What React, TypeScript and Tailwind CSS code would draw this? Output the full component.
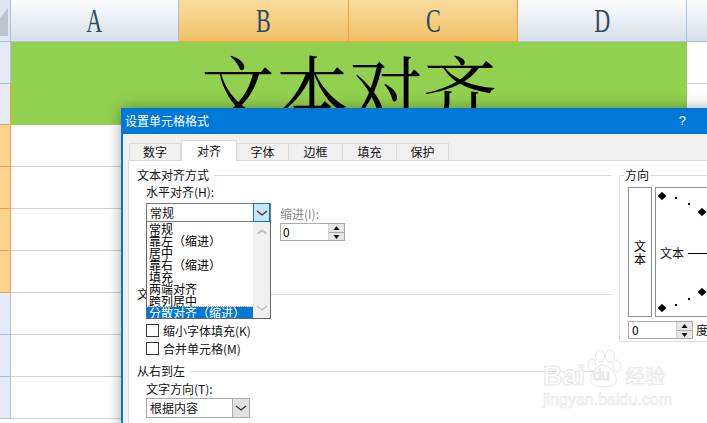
const font = { fontFamily: '"Noto Sans CJK SC", "Liberation Sans", sans-serif' }

const rows = [0, 1, 2, 3, 4, 5, 6]
const columns = [
  { name: 'A', width: 'w-[168px]', active: false },
  { name: 'B', width: 'w-[170px]', active: true },
  { name: 'C', width: 'w-[169px]', active: true },
  { name: 'D', width: 'w-[169px]', active: false },
]
const tabs = [
  { name: '数字', width: 'w-[52px]' },
  { name: '对齐', width: 'w-[56px]' },
  { name: '字体', width: 'w-[52px]' },
  { name: '边框', width: 'w-[54px]' },
  { name: '填充', width: 'w-[54px]' },
  { name: '保护', width: 'w-[52px]' },
]

function Spinner({ className }: { className: string }) {
  return (
    <div className={`flex flex-col justify-center gap-[1px] border-l border-[#d0d0d0] bg-[#e6e6e6] ${className}`}>
      <svg viewBox="0 0 14 6" className="h-[6px] w-full"><path d="M7 1 L10 5 L4 5 Z" fill="#111" /></svg>
      <div className="h-[1px] bg-[#aaa]" />
      <svg viewBox="0 0 14 6" className="h-[6px] w-full"><path d="M4 1 L10 1 L7 5 Z" fill="#111" /></svg>
    </div>
  )
}

function Chevron({ stroke = '#333' }: { stroke?: string }) {
  return (
    <svg viewBox="0 0 14 8" className="h-[8px] w-[14px]">
      <path d="M2 2 L7 6 L12 2" fill="none" stroke={stroke} strokeWidth="1.3" />
    </svg>
  )
}

function Diamond() {
  return <div className="h-[6px] w-[6px] rotate-45 bg-black" />
}

function Dot() {
  return <div className="h-[2px] w-[2px] bg-black" />
}

function Group({ title, className, children }: { title: string; className: string; children?: React.ReactNode }) {
  return (
    <div className={className}>
      <div className="flex items-center gap-[5px] text-[12px] leading-[16px] text-[#111]">
        <span>{title}</span>
        <div className="h-[1px] flex-1 bg-[#dcdcdc]" />
      </div>
      {children}
    </div>
  )
}

const listItems = ['常规', '靠左（缩进）', '居中', '靠右（缩进）', '填充', '两端对齐', '跨列居中']

export default function App() {
  return (
    <div className="relative h-[423px] w-[707px] overflow-hidden bg-white" style={font}>
      {/* sheet header */}
      <div className="flex h-[42px]">
        <div className="flex w-[11px] items-center justify-end border-r border-b border-[#a9c0df] bg-[#dfe6f2]">
          <svg viewBox="0 0 10 41" className="h-[41px] w-[10px]"><path d="M8 8 V36 H0 V18 Z" fill="#bcc4cc" /></svg>
        </div>
        {columns.map(c => (
          <div
            key={c.name}
            className={`flex items-center justify-center border-r border-b text-[#2f4a5e] ${c.width} ${
              c.active
                ? 'border-[#f0a040] bg-gradient-to-b from-[#f9dc9f] to-[#f2c164]'
                : 'border-[#a9c0df] bg-gradient-to-b from-[#fbfcfe] to-[#d8dfea]'
            }`}
            style={{ fontFamily: '"Liberation Serif", serif' }}
          >
            <span className="scale-x-[0.65] text-[34px] leading-none">{c.name}</span>
          </div>
        ))}
        <div className="flex-1 border-b border-[#a9c0df] bg-gradient-to-b from-[#fbfcfe] to-[#d8dfea]" />
      </div>

      {/* sheet body */}
      <div className="flex">
        <div className="flex w-[11px] flex-col">
          <div className="h-[42px] border-r border-b border-[#a9c0df] bg-[#e4ebf7]" />
          <div className="h-[41px] border-r border-b border-[#f0a040] bg-[#e4ebf7]" />
          {rows.map(r => (
            <div
              key={r}
              className={`h-[42px] border-r border-b ${
                r < 4 ? 'border-[#f0a040] bg-[#fad48c]' : 'border-[#a9c0df] bg-[#e4ebf7]'
              }`}
            />
          ))}
        </div>
        <div className="flex-1">
          <div className="flex h-[83px]">
            <div className="flex w-[676px] items-start justify-center bg-[#92d14f] pt-[1px] text-[74px] leading-[86px] text-black" style={{ fontFamily: '"Noto Serif CJK SC", "Liberation Serif", "Noto Sans CJK SC", serif' }}>
              文本对齐
            </div>
            <div className="flex-1">
              <div className="h-[42px] border-b border-[#cdd4de]" />
            </div>
          </div>
          {rows.map(r => (
            <div key={r} className="h-[42px] border-b border-[#cdd4de]" />
          ))}
        </div>
      </div>

      {/* dialog */}
      <div className="absolute top-[108px] left-[121px] h-[340px] w-[620px] border-l-2 border-[#0078d7] bg-[#f0f0f0] shadow-[0_0_14px_rgba(0,0,0,0.35)]">
        <div className="flex h-[26px] items-center justify-between bg-[#0078d7] pr-[55px] pl-[2px] text-[12px] text-white">
          <span>设置单元格格式</span>
          <span className="text-[13px]" style={{ fontFamily: '"Liberation Sans", sans-serif' }}>?</span>
        </div>

        {/* tabs */}
        <div className="flex h-[26px] items-end pl-[6px] text-[12px] text-[#111]">
          {tabs.map(t =>
            t.name === '对齐' ? (
              <div key={t.name} className={`z-10 mb-[-1px] flex h-[21px] items-center justify-center border border-b-0 border-[#d9d9d9] bg-white pb-[1px] ${t.width}`}>
                {t.name}
              </div>
            ) : (
              <div key={t.name} className={`flex h-[17px] items-center justify-center border border-b-0 border-l-0 first:border-l border-[#d9d9d9] bg-[#f0f0f0] ${t.width}`}>
                {t.name}
              </div>
            ),
          )}
        </div>

        {/* page */}
        <div className="ml-[5px] flex h-[300px] border border-[#d9d9d9] bg-white pt-[6px] pl-[8px]">
          <div className="w-[474px]">
            <Group title="文本对齐方式" className="w-[474px]">
              <div className="flex pl-[9px]">
                <div className="w-[125px]">
                  <div className="mt-[1px] text-[12px] leading-[16px] text-[#111]">水平对齐(H):</div>
                  {/* open select */}
                  <div className="relative z-10 mt-[3px] h-[116px] w-[125px]">
                    <div className="flex h-[19px] items-center justify-between border border-[#7a7a7a] bg-white pl-[3px] text-[12px] text-[#111]">
                      <span>常规</span>
                      <div className="flex h-[19px] w-[17px] items-center justify-center border border-[#0078d7] bg-[#cce4f7]">
                        <Chevron />
                      </div>
                    </div>
                    <div className="flex h-[97px] border border-t-0 border-[#666] bg-white">
                      <div className="flex-1 overflow-hidden pt-[1px]">
                        {listItems.map(item => (
                          <div key={item} className="h-[12px] overflow-visible pl-[2px] text-[12px] leading-[12px] whitespace-nowrap text-black">{item}</div>
                        ))}
                        <div className="relative z-10 h-[12px] w-[123px] bg-[#0078d7] pl-[2px] text-[12px] leading-[12px] whitespace-nowrap text-white outline-1 outline-dotted outline-[#f0a040]">分散对齐（缩进）</div>
                      </div>
                      <div className="z-20 flex h-full w-[17px] flex-col items-center justify-between bg-[#f0f0f0] py-[6px]">
                        <svg viewBox="0 0 14 8" className="h-[8px] w-[12px]"><path d="M2 6 L7 2 L12 6" fill="none" stroke="#bdbdbd" strokeWidth="2" /></svg>
                        <Chevron stroke="#bdbdbd" />
                      </div>
                    </div>
                  </div>
                </div>
                <div className="ml-[9px] pt-[23px]">
                  <div className="text-[12px] leading-[16px] text-[#888]">缩进(I):</div>
                  <div className="mt-[1px] flex h-[18px] w-[65px] border border-[#ababab] bg-white">
                    <span className="flex-1 pl-[2px] text-[12px] leading-[16px]">0</span>
                    <Spinner className="w-[16px]" />
                  </div>
                </div>
              </div>
            </Group>

            <Group title="文本控制" className="mt-[-33px] w-[474px]">
              <div className="mt-[20px] flex flex-col gap-[1px] pl-[9px]">
                {['缩小字体填充(K)', '合并单元格(M)'].map(label => (
                  <div key={label} className="flex h-[17px] items-center gap-[4px] text-[12px] text-[#111]">
                    <div className="h-[13px] w-[13px] border border-[#333] bg-white" />
                    <span>{label}</span>
                  </div>
                ))}
              </div>
            </Group>

            <Group title="从右到左" className="mt-[6px] w-[474px]">
              <div className="mt-[2px] pl-[9px]">
                <div className="text-[12px] leading-[16px] text-[#111]">文字方向(T):</div>
                <div className="mt-[1px] flex h-[20px] w-[104px] border border-[#ababab] bg-white">
                  <span className="flex-1 pl-[3px] text-[12px] leading-[18px] text-[#111]">根据内容</span>
                  <div className="flex w-[17px] items-center justify-center border-l border-[#ababab] bg-[#e1e1e1]">
                    <Chevron />
                  </div>
                </div>
              </div>
            </Group>
          </div>

          {/* orientation */}
          <div className="mt-[8px] ml-[8px] h-[167px] w-[100px] rounded-[1px] border border-[#dcdcdc]">
            <div className="mt-[-9px] ml-[4px] w-fit bg-white px-[1px] text-[12px] leading-[16px] text-[#111]">方向</div>
            <div className="mt-[4px] ml-[8px] flex gap-[3px]">
              <div className="flex h-[130px] w-[24px] items-center justify-center border border-[#8a8f99] text-[12px] leading-[13px] text-black">
                <span className="w-[12px] text-center">文本</span>
              </div>
              <div className="relative h-[130px] w-[60px] border border-r-0 border-[#8a8f99]">
                <div className="absolute top-[5px] left-[3px]"><Diamond /></div>
                <div className="absolute top-[9px] left-[19px]"><Dot /></div>
                <div className="absolute top-[15px] left-[32px]"><Dot /></div>
                <div className="absolute top-[21px] left-[43px]"><Diamond /></div>
                <div className="absolute top-[101px] left-[43px]"><Diamond /></div>
                <div className="absolute top-[110px] left-[32px]"><Dot /></div>
                <div className="absolute top-[116px] left-[19px]"><Dot /></div>
                <div className="absolute top-[117px] left-[3px]"><Diamond /></div>
                <div className="absolute top-[58px] left-[4px] flex items-center gap-[4px] text-[12px] leading-[14px] whitespace-nowrap text-[#111]">
                  <span>文本</span>
                  <div className="h-[1px] w-[30px] bg-black" />
                </div>
              </div>
            </div>
            <div className="mt-[4px] ml-[8px] flex items-center gap-[3px]">
              <div className="flex h-[18px] w-[65px] border border-[#ababab] bg-white">
                <span className="flex-1 pl-[3px] text-[12px] leading-[16px]">0</span>
                <Spinner className="w-[16px]" />
              </div>
              <span className="text-[12px] text-[#111]">度</span>
            </div>
          </div>
        </div>
      </div>

      {/* watermark */}
      <div className="absolute top-[350px] left-[543px] flex h-[38px] items-center text-white [-webkit-text-stroke:1px_#e6e6e6]" style={{ fontFamily: '"Liberation Sans", sans-serif' }}>
        <span className="mt-[14px] w-[42px] text-[27px] leading-[24px] font-bold">Bai</span>
        <div className="relative h-[38px] w-[37px]">
          <svg viewBox="0 0 37 38" className="h-[38px] w-[37px]" fill="white" stroke="#e6e6e6" strokeWidth="1">
            <ellipse cx="7" cy="15" rx="4" ry="6" />
            <ellipse cx="15" cy="6" rx="4.5" ry="6" />
            <ellipse cx="25" cy="6" rx="4.5" ry="6" />
            <ellipse cx="32" cy="16" rx="4" ry="6" />
            <path d="M18 15 C12 15 2 28 7 34 C12 38 25 38 30 34 C35 28 25 15 18 15 Z" />
          </svg>
          <span className="absolute top-[16px] left-[8px] text-[15px] leading-[18px]">du</span>
        </div>
        <span className="mt-[14px] ml-[3px] text-[20px] leading-[20px] whitespace-nowrap [-webkit-text-stroke:0.7px_#e6e6e6]" style={font}>经验</span>
      </div>
      <div className="absolute top-[391px] left-[543px] text-[16px] leading-[18px] whitespace-nowrap text-white [-webkit-text-stroke:0.6px_#e6e6e6]" style={{ fontFamily: '"Liberation Sans", sans-serif' }}>
        jingyan.baidu.com
      </div>
    </div>
  )
}
